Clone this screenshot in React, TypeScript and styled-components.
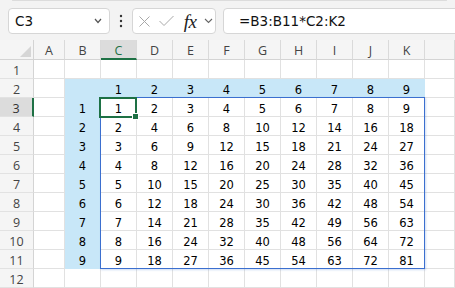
import React from 'react'
import styled, { createGlobalStyle, css } from 'styled-components'

const GlobalStyle = createGlobalStyle`
  html, body {
    margin: 0;
    padding: 0;
    background: #f3f3f3;
  }
  body {
    width: 455px;
    height: 288px;
    overflow: hidden;
    font-family: "DejaVu Sans", Verdana, sans-serif;
  }
`

// last column (L) is only partly in view, its label sits past the edge
const COLS = ['A', 'B', 'C', 'D', 'E', 'F', 'G', 'H', 'I', 'J', 'K', '']
const ROWS = [1, 2, 3, 4, 5, 6, 7, 8, 9, 10, 11, 12]
const FILL = '#c8e7f8'
const GRID = '#e1e1e1'
const GREEN = '#1e7145'

// value + fill for a cell, the sheet is B2:K11 multiplication table
const cellData = (col: number, row: number) => {
  // col: 0 = A, 1 = B ...
  if (row === 2 && col >= 2 && col <= 10) return { value: String(col - 1), fill: true }
  if (row === 2 && col === 1) return { value: '', fill: true }
  if (col === 1 && row >= 3 && row <= 11) return { value: String(row - 2), fill: true }
  if (col >= 2 && col <= 10 && row >= 3 && row <= 11) {
    return { value: String((col - 1) * (row - 2)), fill: false }
  }
  return { value: '', fill: false }
}

export default function App(): JSX.Element {
  return (
    <>
      <GlobalStyle />
      <Shell>
        <RibbonEdge />
        <FormulaBar>
          <NameBox>
            <span>C3</span>
            <svg width="8" height="6" viewBox="0 0 8 6">
              <polyline points="1,1 4,4.5 7,1" fill="none" stroke="#555" strokeWidth="1.2" />
            </svg>
          </NameBox>
          <Dots>
            <svg width="4" height="14" viewBox="0 0 4 14">
              <circle cx="2" cy="2" r="1.2" fill="#333" />
              <circle cx="2" cy="7" r="1.2" fill="#333" />
              <circle cx="2" cy="12" r="1.2" fill="#333" />
            </svg>
          </Dots>
          <FxGroup>
            <IconSlot $w={20}>
              <svg width="11" height="11" viewBox="0 0 11 11">
                <path d="M0.5 0.5 L10.5 10.5 M10.5 0.5 L0.5 10.5" stroke="#a8a8a8" strokeWidth="1" />
              </svg>
            </IconSlot>
            <IconSlot $w={24}>
              <svg width="15" height="12" viewBox="0 0 15 12">
                <polyline points="0.5,6 5,10.5 14.5,1" fill="none" stroke="#a8a8a8" strokeWidth="1" />
              </svg>
            </IconSlot>
            <FxLabel>fx</FxLabel>
            <IconSlot $w={12}>
              <svg width="9" height="6" viewBox="0 0 9 6">
                <polyline points="1,1 4.5,4.5 8,1" fill="none" stroke="#666" strokeWidth="1.1" />
              </svg>
            </IconSlot>
          </FxGroup>
          <FormulaInput>=B3:B11*C2:K2</FormulaInput>
        </FormulaBar>

        <Sheet>
          <Corner>
            <CornerMark />
          </Corner>
          {COLS.map((c, ci) => (
            <ColHeader key={ci} $active={c === 'C'}>{c}</ColHeader>
          ))}
          {ROWS.map((r) => (
            <React.Fragment key={r}>
              <RowHeader $active={r === 3}>{r}</RowHeader>
              {COLS.map((_, ci) => {
                const d = cellData(ci, r)
                return (
                  <Cell key={ci} $fill={d.fill}>{d.value}</Cell>
                )
              })}
            </React.Fragment>
          ))}
          <RangeBox />
          <Selection>
            <FillHandle />
          </Selection>
        </Sheet>
      </Shell>
    </>
  )
}

const Shell = styled.div`
  display: flex;
  flex-direction: column;
  width: 455px;
  height: 288px;
  overflow: hidden;
`

const RibbonEdge = styled.div`
  height: 2px;
  margin: 0 8px 0 12px;
  background: #fbfbfb;
  border: 1px solid #dcdcdc;
  border-top: none;
  border-radius: 0 0 5px 5px;
`

const FormulaBar = styled.div`
  display: flex;
  align-items: center;
  height: 26px;
  margin-top: 7px;
  padding-left: 8px;
`

const boxBase = css`
  box-sizing: border-box;
  height: 26px;
  background: #ffffff;
  border: 1px solid #d6d6d6;
  border-radius: 4px;
  display: flex;
  align-items: center;
`

const NameBox = styled.div`
  ${boxBase};
  width: 102px;
  padding: 0 7px 0 6px;
  justify-content: space-between;
  font-size: 13.5px;
  color: #111;
`

const Dots = styled.div`
  width: 22px;
  display: flex;
  justify-content: center;
  align-items: center;
`

const FxGroup = styled.div`
  ${boxBase};
  width: 84px;
  padding-left: 1px;
`

const IconSlot = styled.span<{ $w: number }>`
  width: ${(p) => p.$w}px;
  display: flex;
  justify-content: center;
  align-items: center;
`

const FxLabel = styled.span`
  width: 24px;
  text-align: center;
  font-family: "Liberation Serif", "Times New Roman", serif;
  font-style: italic;
  font-size: 19px;
  color: #222;
  letter-spacing: -0.5px;
  line-height: 1;
`

const FormulaInput = styled.div`
  ${boxBase};
  flex: 1;
  margin-left: 7px;
  margin-right: -20px;
  padding-left: 15px;
  border-radius: 4px 0 0 4px;
  font-size: 13.5px;
  color: #111;
`

const Sheet = styled.div`
  position: relative;
  margin-top: 6px;
  display: grid;
  grid-template-columns: 34px 31px repeat(10, 36px) 30px;
  grid-template-rows: 20px;
  grid-auto-rows: 19px;
`

const headerBase = css`
  box-sizing: border-box;
  display: flex;
  justify-content: center;
  font-family: "Open Sans", "Noto Sans", sans-serif;
  font-size: 12.5px;
  color: #444;
  background: #f5f5f5;
`

const Corner = styled.div`
  box-sizing: border-box;
  background: #f5f5f5;
  border-right: 1px solid #d4d4d4;
  border-bottom: 1px solid #d4d4d4;
  display: flex;
  justify-content: flex-end;
  align-items: flex-end;
  padding: 0 2px 2px 0;
`

const CornerMark = styled.div`
  width: 0;
  height: 0;
  border-left: 11px solid transparent;
  border-bottom: 11px solid #d6d6d6;
`

const ColHeader = styled.div<{ $active?: boolean }>`
  ${headerBase};
  align-items: center;
  padding-top: 2px;
  border-right: 1px solid #dadada;
  border-bottom: 1px solid #d4d4d4;
  ${(p) =>
    p.$active &&
    css`
      background: #dcdcdc;
      color: ${GREEN};
      border-bottom: 2px solid ${GREEN};
    `}
`

const RowHeader = styled.div<{ $active?: boolean }>`
  ${headerBase};
  align-items: center;
  padding-top: 2px;
  border-right: 1px solid #d4d4d4;
  border-bottom: 1px solid #e2e2e2;
  ${(p) =>
    p.$active &&
    css`
      background: #dcdcdc;
      color: #333;
      border-right: 2px solid ${GREEN};
    `}
`

const Cell = styled.div<{ $fill?: boolean }>`
  box-sizing: border-box;
  display: flex;
  justify-content: center;
  align-items: flex-end;
  font-size: 11.5px;
  color: #000;
  background: ${(p) => (p.$fill ? FILL : '#ffffff')};
  border-right: 1px solid ${(p) => (p.$fill ? FILL : GRID)};
  border-bottom: 1px solid ${(p) => (p.$fill ? FILL : GRID)};
`

const RangeBox = styled.div`
  position: absolute;
  left: 100px;
  top: 57px;
  width: 325px;
  height: 172px;
  box-sizing: border-box;
  border: 1px solid #3b6fcf;
  box-shadow: 1px 1px 2px rgba(59, 111, 207, 0.25);
  pointer-events: none;
`

const Selection = styled.div`
  position: absolute;
  left: 99px;
  top: 57px;
  width: 38px;
  height: 21px;
  box-sizing: border-box;
  border: 2px solid ${GREEN};
  pointer-events: none;
`

const FillHandle = styled.div`
  position: absolute;
  right: -4px;
  bottom: -4px;
  width: 5px;
  height: 5px;
  background: ${GREEN};
  border: 1px solid #ffffff;
`
